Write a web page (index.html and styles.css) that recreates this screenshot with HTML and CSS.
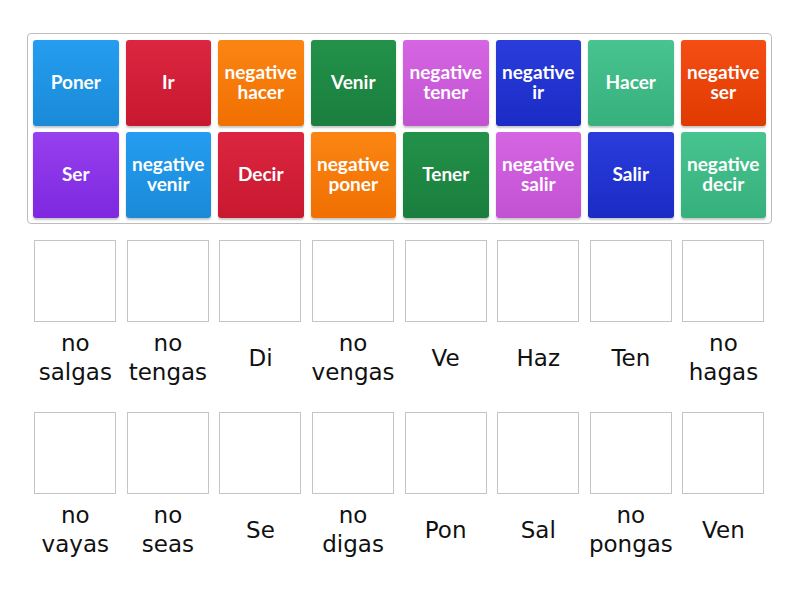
FILE: index.html
```html
<!DOCTYPE html>
<html>
<head>
<meta charset="utf-8">
<link rel="stylesheet" href="styles.css">
</head>
<body>
<div class="page">
  <div class="bank">
    <div class="tile c-blue">Poner</div>
    <div class="tile c-red">Ir</div>
    <div class="tile c-orange">negative hacer</div>
    <div class="tile c-green">Venir</div>
    <div class="tile c-pink">negative tener</div>
    <div class="tile c-navy">negative ir</div>
    <div class="tile c-teal">Hacer</div>
    <div class="tile c-vermil">negative ser</div>
    <div class="tile c-purple">Ser</div>
    <div class="tile c-blue">negative venir</div>
    <div class="tile c-red">Decir</div>
    <div class="tile c-orange">negative poner</div>
    <div class="tile c-green">Tener</div>
    <div class="tile c-pink">negative salir</div>
    <div class="tile c-navy">Salir</div>
    <div class="tile c-teal">negative decir</div>
  </div>

  <div class="targets">
    <div class="slot"><div class="box"></div><div class="label">no<br>salgas</div></div>
    <div class="slot"><div class="box"></div><div class="label">no<br>tengas</div></div>
    <div class="slot"><div class="box"></div><div class="label">Di</div></div>
    <div class="slot"><div class="box"></div><div class="label">no<br>vengas</div></div>
    <div class="slot"><div class="box"></div><div class="label">Ve</div></div>
    <div class="slot"><div class="box"></div><div class="label">Haz</div></div>
    <div class="slot"><div class="box"></div><div class="label">Ten</div></div>
    <div class="slot"><div class="box"></div><div class="label">no<br>hagas</div></div>

    <div class="slot"><div class="box"></div><div class="label">no<br>vayas</div></div>
    <div class="slot"><div class="box"></div><div class="label">no<br>seas</div></div>
    <div class="slot"><div class="box"></div><div class="label">Se</div></div>
    <div class="slot"><div class="box"></div><div class="label">no<br>digas</div></div>
    <div class="slot"><div class="box"></div><div class="label">Pon</div></div>
    <div class="slot"><div class="box"></div><div class="label">Sal</div></div>
    <div class="slot"><div class="box"></div><div class="label">no<br>pongas</div></div>
    <div class="slot"><div class="box"></div><div class="label">Ven</div></div>
  </div>
</div>
</body>
</html>
```

FILE: styles.css
```css
html, body {
  margin: 0;
  padding: 0;
  background: #ffffff;
}

.page {
  width: 800px;
  height: 600px;
  padding: 33px 0 0 27px;
  box-sizing: border-box;
  font-family: Lato, "Liberation Sans", sans-serif;
}

.bank {
  width: 745px;
  height: 191px;
  box-sizing: border-box;
  border: 1px solid #bdbdbd;
  border-radius: 4px;
  padding: 6px 5px 6px 5px;
  display: grid;
  grid-template-columns: repeat(8, 1fr);
  grid-template-rows: 86px 86px;
  column-gap: 7px;
  row-gap: 6px;
}

.tile {
  border-radius: 3px;
  display: flex;
  align-items: center;
  justify-content: center;
  text-align: center;
  color: #ffffff;
  font-weight: 700;
  font-size: 19px;
  line-height: 20px;
  padding: 0 2px 3px 2px;
  box-shadow: 0 2px 2px rgba(0, 0, 0, 0.22);
}

.c-blue   { background: linear-gradient(#259df0, #1a8ad8); }
.c-red    { background: linear-gradient(#dc2640, #c81830); }
.c-orange { background: linear-gradient(#fb8514, #f07000); }
.c-green  { background: linear-gradient(#239249, #1a7e3e); }
.c-pink   { background: linear-gradient(#d665e4, #c352d2); }
.c-navy   { background: linear-gradient(#2a3ddc, #1b2bc4); }
.c-teal   { background: linear-gradient(#48c490, #36b07c); }
.c-vermil { background: linear-gradient(#f44e14, #e03a00); }
.c-purple { background: linear-gradient(#9640ee, #7e28e0); }

.targets {
  margin-top: 16px;
  margin-left: 2px;
  width: 741px;
  display: grid;
  grid-template-columns: repeat(8, 92.6px);
  row-gap: 25px;
}

.slot {
  display: flex;
  flex-direction: column;
  align-items: center;
}

.box {
  width: 80px;
  height: 80px;
  border: 1px solid #c4c4c4;
  background: #ffffff;
  flex: none;
}

.label {
  margin-top: 7px;
  width: 92px;
  height: 58px;
  display: flex;
  align-items: center;
  justify-content: center;
  text-align: center;
  white-space: nowrap;
  font-family: "DejaVu Sans", Verdana, sans-serif;
  font-size: 23px;
  line-height: 29px;
  color: #111111;
}
```
